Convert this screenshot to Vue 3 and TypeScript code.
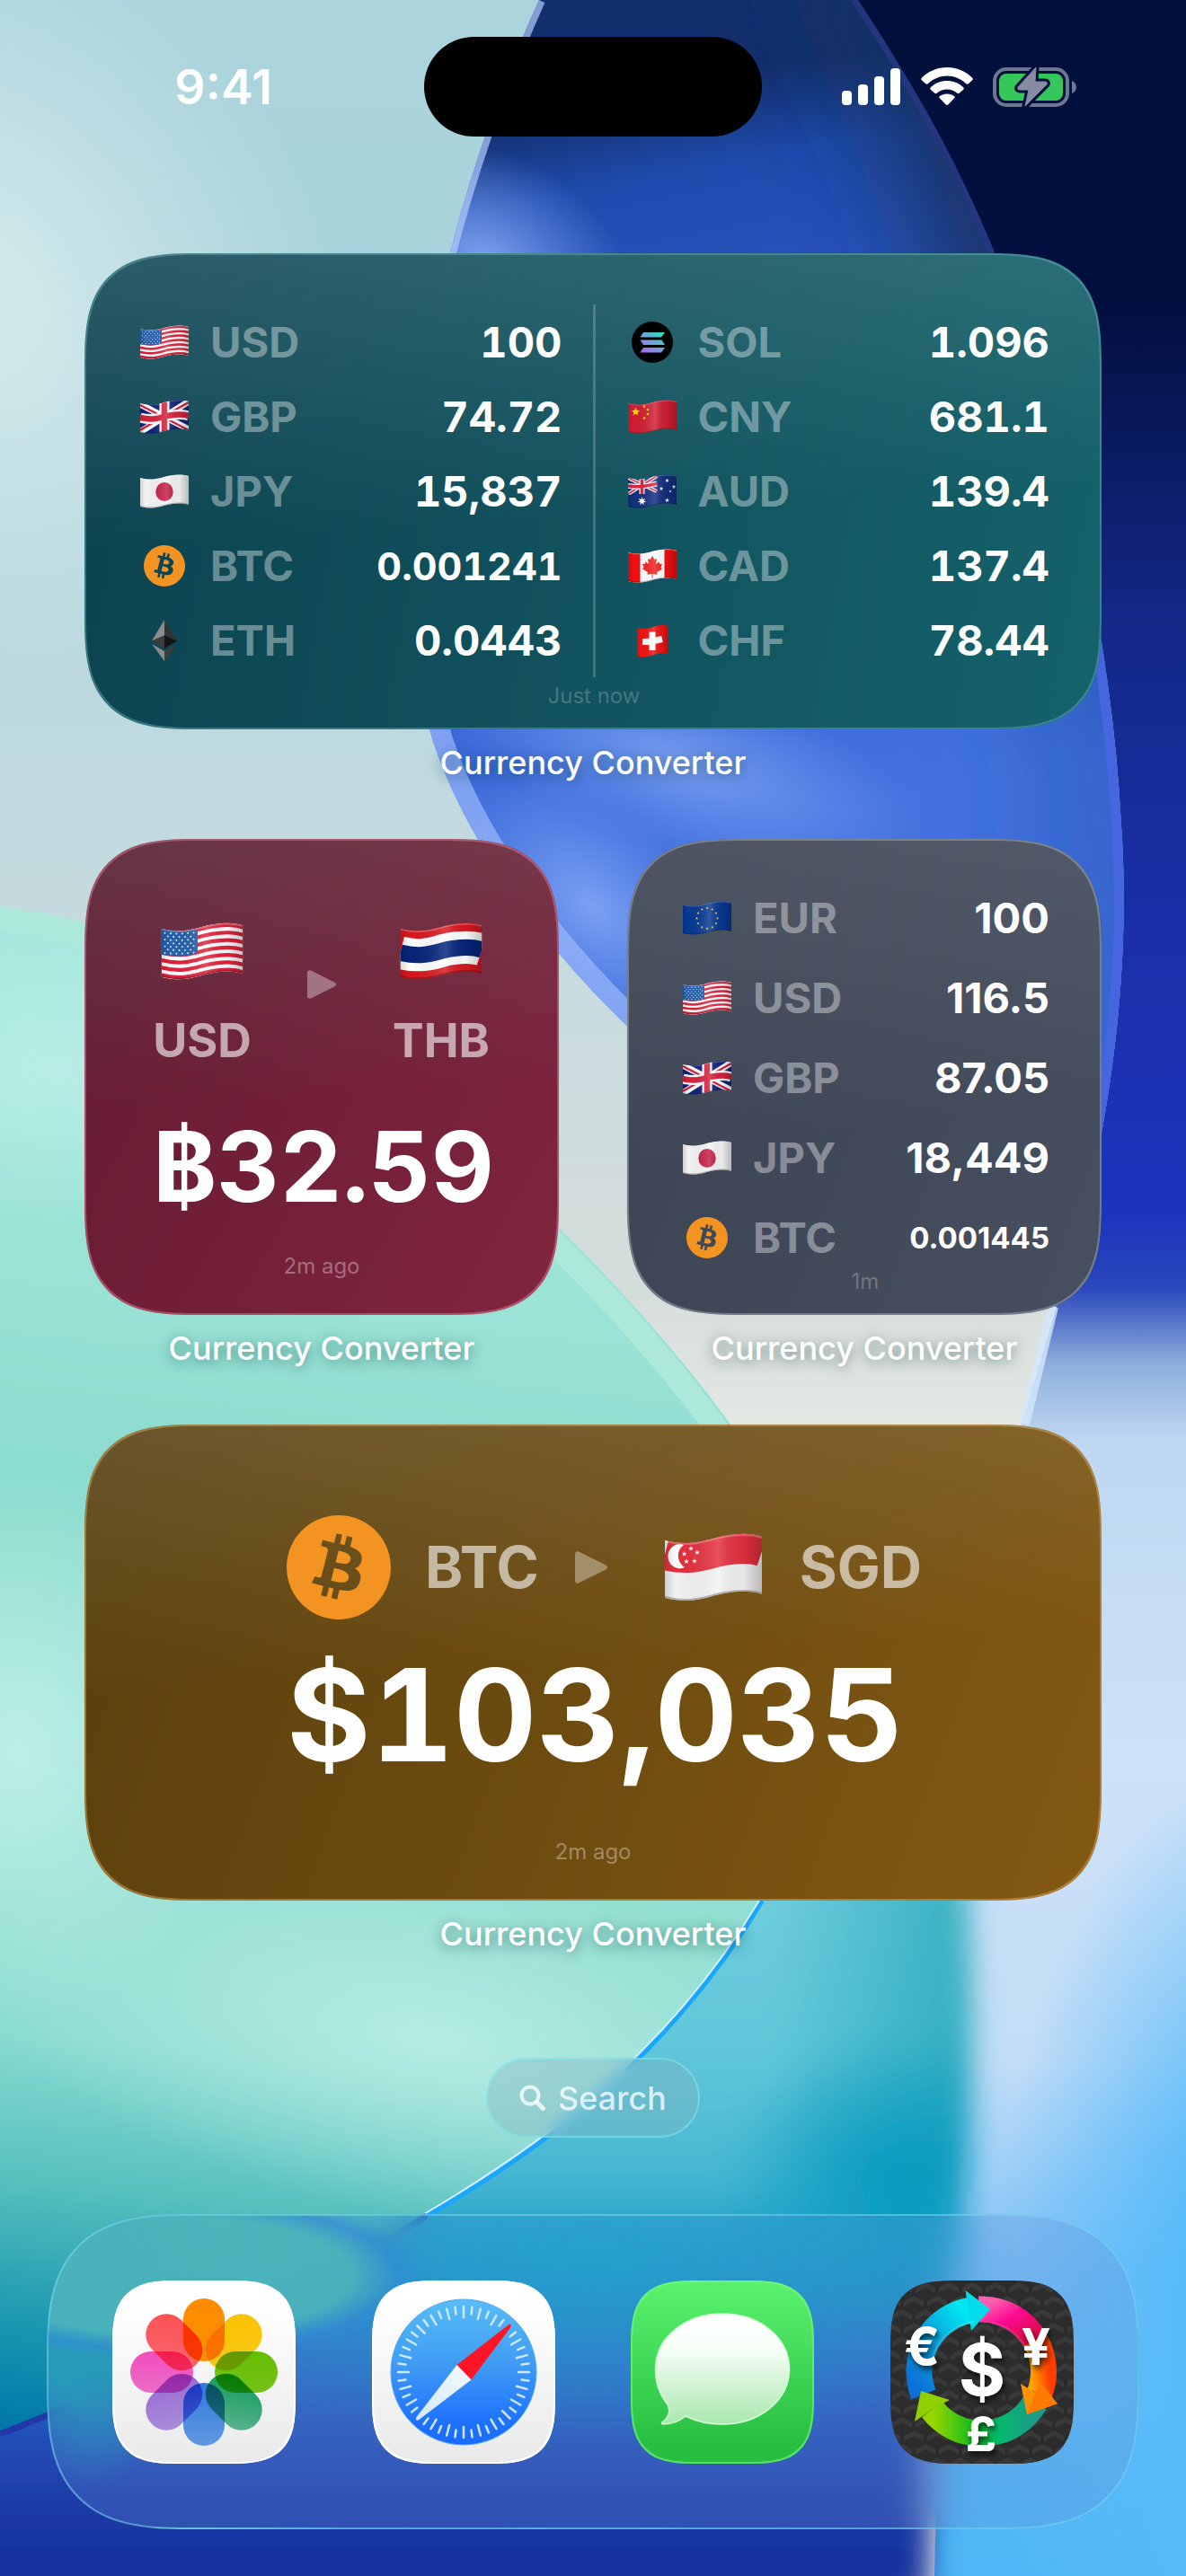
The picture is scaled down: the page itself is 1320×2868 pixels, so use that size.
<script setup lang="ts">
interface Rate {
  icon: string
  code: string
  value: string
  size?: 'mid' | 'small'
}

interface AppIcon {
  id: string
  name: string
}

const leftRates: Rate[] = [
  { icon: 'us', code: 'USD', value: '100' },
  { icon: 'gb', code: 'GBP', value: '74.72' },
  { icon: 'jp', code: 'JPY', value: '15,837' },
  { icon: 'btc', code: 'BTC', value: '0.001241', size: 'mid' },
  { icon: 'eth', code: 'ETH', value: '0.0443' },
]

const rightRates: Rate[] = [
  { icon: 'sol', code: 'SOL', value: '1.096' },
  { icon: 'cn', code: 'CNY', value: '681.1' },
  { icon: 'au', code: 'AUD', value: '139.4' },
  { icon: 'ca', code: 'CAD', value: '137.4' },
  { icon: 'ch', code: 'CHF', value: '78.44' },
]

const euroRates: Rate[] = [
  { icon: 'eu', code: 'EUR', value: '100' },
  { icon: 'us', code: 'USD', value: '116.5' },
  { icon: 'gb', code: 'GBP', value: '87.05' },
  { icon: 'jp', code: 'JPY', value: '18,449' },
  { icon: 'btc', code: 'BTC', value: '0.001445', size: 'small' },
]

const dock: AppIcon[] = [
  { id: 'photos', name: 'Photos' },
  { id: 'safari', name: 'Safari' },
  { id: 'messages', name: 'Messages' },
  { id: 'currency', name: 'Currency Converter' },
]

// Horizontal line across a waving flag that starts at height y on the hoist side.
const wave = (y: number): string => `M0 ${y}c16 4 24 -1 33 -2.5s15 -1.5 21 .5`

const usStripes = Array.from({ length: 7 }, (_, i) => 4 + (i * 2 + 0.5) * (32 / 13))

const usStars: { x: number; y: number }[] = []
for (let r = 0; r < 7; r++) {
  for (let c = 0; c < 6 - (r % 2); c++) {
    usStars.push({ x: 2.4 + c * 3.8 + (r % 2) * 1.9, y: 6.6 + r * 2.2 + Math.sin((c + 1) * 0.5) * 0.8 })
  }
}

const star = (cx: number, cy: number, r: number, points = 5): string => {
  const out: string[] = []
  for (let i = 0; i < points * 2; i++) {
    const a = (Math.PI * i) / points
    const rad = i % 2 ? r * 0.42 : r
    out.push(`${(cx + rad * Math.sin(a)).toFixed(2)},${(cy - rad * Math.cos(a)).toFixed(2)}`)
  }
  return out.join(' ')
}

const euStars = Array.from({ length: 12 }, (_, i) => {
  const a = (Math.PI * i) / 6
  return star(27 + 11.5 * Math.sin(a), 19.4 - 11.5 * Math.cos(a), 1.6)
})

const petals = [
  { angle: 0, from: '#ff8a00', to: '#ff9500' },
  { angle: 45, from: '#ffc400', to: '#ffcf1a' },
  { angle: 90, from: '#66c400', to: '#7dcb1c' },
  { angle: 135, from: '#12a35f', to: '#5cbd93' },
  { angle: 180, from: '#2f7de6', to: '#68a5f2' },
  { angle: 225, from: '#a06fdc', to: '#b394e8' },
  { angle: 270, from: '#f94fc2', to: '#f772d0' },
  { angle: 315, from: '#ff5257', to: '#ff6a70' },
]

const ticks = Array.from({ length: 48 }, (_, i) => ({ angle: i * 7.5, inner: i % 2 ? 37 : 41 }))
</script>

<template>
  <div class="screen">
    <svg class="wallpaper" viewBox="0 0 1320 2868" preserveAspectRatio="none" aria-hidden="true">
      <defs>
        <linearGradient id="wp-base" x1="0" y1="0" x2="0" y2="2868" gradientUnits="userSpaceOnUse">
          <stop offset="0" stop-color="#abd4dc" />
          <stop offset=".1" stop-color="#a9d3da" />
          <stop offset=".33" stop-color="#c3dae0" />
          <stop offset=".5" stop-color="#d5dddb" />
          <stop offset=".56" stop-color="#e6e9e4" />
          <stop offset="1" stop-color="#e6e9e4" />
        </linearGradient>
        <radialGradient id="wp-glow" cx="0" cy="330" r="420" gradientUnits="userSpaceOnUse" gradientTransform="matrix(1 .3 -.1 1 0 0)">
          <stop offset="0" stop-color="#d6ebee" />
          <stop offset="1" stop-color="#d6ebee" stop-opacity="0" />
        </radialGradient>
        <linearGradient id="wp-right" x1="0" y1="0" x2="0" y2="2868" gradientUnits="userSpaceOnUse">
          <stop offset="0" stop-color="#00103a" />
          <stop offset=".12" stop-color="#030f40" />
          <stop offset=".24" stop-color="#132887" />
          <stop offset=".36" stop-color="#1a2fa8" />
          <stop offset=".47" stop-color="#1c33bd" />
          <stop offset=".5" stop-color="#2a48bb" />
          <stop offset=".53" stop-color="#8fb0dc" />
          <stop offset=".56" stop-color="#bfd7f2" />
          <stop offset=".68" stop-color="#cde2f8" />
          <stop offset=".8" stop-color="#c3ddf6" />
          <stop offset=".88" stop-color="#7fc2f6" />
          <stop offset=".96" stop-color="#50b8f4" />
          <stop offset="1" stop-color="#4fb7f5" />
        </linearGradient>
        <radialGradient id="wp-sky" cx="1420" cy="2600" r="320" gradientUnits="userSpaceOnUse" gradientTransform="translate(1420 2600) scale(1 2) translate(-1420 -2600)">
          <stop offset="0" stop-color="#43b2fb" />
          <stop offset=".35" stop-color="#58bbf9" />
          <stop offset="1" stop-color="#58bbf9" stop-opacity="0" />
        </radialGradient>
        <linearGradient id="wp-lens" x1="520" y1="0" x2="780" y2="1350" gradientUnits="userSpaceOnUse">
          <stop offset="0" stop-color="#12306f" />
          <stop offset=".1" stop-color="#132f6c" />
          <stop offset=".17" stop-color="#1f4bad" />
          <stop offset=".3" stop-color="#2b55c0" />
          <stop offset=".5" stop-color="#3563d2" />
          <stop offset=".7" stop-color="#4473e0" />
          <stop offset="1" stop-color="#3a6ad8" />
        </linearGradient>
        <linearGradient id="wp-lens-edge" x1="0" y1="0" x2="0" y2="1480" gradientUnits="userSpaceOnUse">
          <stop offset="0" stop-color="#15315f" stop-opacity=".95" />
          <stop offset=".25" stop-color="#15315f" stop-opacity=".9" />
          <stop offset=".55" stop-color="#2656b8" stop-opacity=".5" />
          <stop offset="1" stop-color="#2656b8" stop-opacity=".2" />
        </linearGradient>
        <linearGradient id="wp-rim" x1="0" y1="0" x2="0" y2="1455" gradientUnits="userSpaceOnUse">
          <stop offset="0" stop-color="#9bb8fb" stop-opacity="0" />
          <stop offset=".3" stop-color="#9bb8fb" stop-opacity="0" />
          <stop offset=".5" stop-color="#9bb8fb" stop-opacity=".7" />
          <stop offset="1" stop-color="#9bb8fb" stop-opacity=".7" />
        </linearGradient>
        <radialGradient id="wp-spot" cx=".5" cy=".5" r=".5">
          <stop offset="0" stop-color="#8fb1f8" />
          <stop offset="1" stop-color="#7ba2f4" stop-opacity="0" />
        </radialGradient>
        <linearGradient id="wp-mint" x1="380" y1="1050" x2="200" y2="2720" gradientUnits="userSpaceOnUse">
          <stop offset="0" stop-color="#a5e8dd" />
          <stop offset=".22" stop-color="#9ce3d7" />
          <stop offset=".36" stop-color="#8cdccf" />
          <stop offset=".62" stop-color="#93dfd2" />
          <stop offset=".74" stop-color="#8adbd0" />
          <stop offset=".84" stop-color="#55c0bd" />
          <stop offset=".93" stop-color="#1c98b0" />
          <stop offset="1" stop-color="#0079a8" />
        </linearGradient>
        <radialGradient id="wp-pale" cx=".5" cy=".5" r=".5">
          <stop offset="0" stop-color="#c2f1e9" />
          <stop offset="1" stop-color="#c2f1e9" stop-opacity="0" />
        </radialGradient>
        <linearGradient id="wp-sea" x1="0" y1="2100" x2="0" y2="2868" gradientUnits="userSpaceOnUse">
          <stop offset="0" stop-color="#70cddd" />
          <stop offset=".25" stop-color="#5fc6d9" />
          <stop offset=".42" stop-color="#46b7d2" />
          <stop offset=".54" stop-color="#179ac4" />
          <stop offset=".68" stop-color="#236fc4" />
          <stop offset=".82" stop-color="#2449b4" />
          <stop offset=".93" stop-color="#1a36a2" />
          <stop offset="1" stop-color="#12309c" />
        </linearGradient>
        <linearGradient id="wp-sea-edge" x1="860" y1="0" x2="1080" y2="0" gradientUnits="userSpaceOnUse">
          <stop offset="0" stop-color="#0898ac" stop-opacity="0" />
          <stop offset="1" stop-color="#0898ac" stop-opacity=".55" />
        </linearGradient>
        <radialGradient id="wp-deep" cx=".5" cy=".5" r=".5">
          <stop offset="0" stop-color="#0499be" />
          <stop offset="1" stop-color="#0499be" stop-opacity="0" />
        </radialGradient>
        <clipPath id="wp-sea-clip">
          <path d="M-60 1900H1050C1090 2060 1090 2420 1062 2540S1040 2760 1032 2900H-60Z" />
        </clipPath>
        <clipPath id="wp-lens-clip">
          <path d="M600 0C500 220 410 560 478 812C520 960 700 1240 1176 1455C1220 1330 1262 1120 1248 920C1235 700 1190 480 1105 285C1070 200 1030 120 951 0Z" />
        </clipPath>
        <clipPath id="wp-mint-clip">
          <path d="M0 1010C220 1030 480 1220 640 1385C720 1465 780 1540 813 1586C940 1780 930 1980 845 2116C740 2290 600 2390 472 2465C330 2560 150 2650 0 2707Z" />
        </clipPath>
        <filter id="wp-blur" x="-50%" y="-50%" width="200%" height="200%">
          <feGaussianBlur stdDeviation="16" />
        </filter>
        <filter id="wp-blur-wide" x="-50%" y="-50%" width="200%" height="200%">
          <feGaussianBlur stdDeviation="60" />
        </filter>
      </defs>
      <rect width="1320" height="2868" fill="url(#wp-base)" />
      <rect width="700" height="1000" fill="url(#wp-glow)" />
      <path d="M951 0C1100 220 1230 560 1248 920C1262 1120 1220 1330 1176 1455L1137 1586C1100 1720 1060 1900 1040 2868H1320V0Z" fill="url(#wp-right)" />
      <rect x="900" y="1700" width="420" height="1168" fill="url(#wp-sky)" />
      <path d="M1172 1455L1140 1586" stroke="#d3e7fb" stroke-width="12" fill="none" opacity=".8" />
      <g clip-path="url(#wp-lens-clip)">
        <rect x="380" width="900" height="1480" fill="url(#wp-lens)" />
        <path d="M880 -60C1040 200 1130 560 1150 920S1200 1300 1180 1500H1400V-60Z" fill="url(#wp-lens-edge)" filter="url(#wp-blur-wide)" />
        <ellipse cx="540" cy="290" rx="170" ry="120" fill="url(#wp-spot)" opacity=".85" transform="rotate(25 540 290)" />
        <ellipse cx="760" cy="850" rx="280" ry="100" fill="url(#wp-spot)" opacity=".7" transform="rotate(18 760 850)" />
        <ellipse cx="660" cy="1010" rx="180" ry="110" fill="url(#wp-spot)" opacity=".75" transform="rotate(45 660 1010)" />
        <path d="M600 0C500 220 410 560 478 812C520 960 700 1240 1176 1455" fill="none" stroke="url(#wp-rim)" stroke-width="44" />
        <path d="M600 0C500 220 410 560 478 812" fill="none" stroke="#b5cbff" stroke-width="14" opacity=".7" />
        <path d="M1105 285C1190 480 1235 700 1248 920C1262 1120 1220 1330 1176 1455" fill="none" stroke="#4566df" stroke-width="22" />
      </g>
      <path d="M951 0C1030 120 1070 200 1105 285" fill="none" stroke="#22377d" stroke-width="7" />
      <g filter="url(#wp-blur)">
        <g clip-path="url(#wp-sea-clip)">
          <path d="M780 1900H1100V2900H-60V2600Z" fill="url(#wp-sea)" />
          <rect x="760" y="2000" width="340" height="440" fill="url(#wp-sea-edge)" />
          <ellipse cx="1010" cy="2430" rx="210" ry="170" fill="url(#wp-deep)" />
        </g>
      </g>
      <g clip-path="url(#wp-mint-clip)">
        <rect y="1000" width="940" height="1720" fill="url(#wp-mint)" />
        <ellipse cx="60" cy="1190" rx="280" ry="170" fill="url(#wp-pale)" opacity=".7" />
        <ellipse cx="20" cy="1950" rx="260" ry="300" fill="url(#wp-pale)" opacity=".9" />
        <ellipse cx="480" cy="2270" rx="520" ry="200" fill="url(#wp-pale)" opacity=".75" transform="rotate(10 480 2270)" />
        <path d="M0 1022C220 1042 470 1232 630 1397C710 1477 770 1552 803 1598" fill="none" stroke="#ade9da" stroke-width="26" />
      </g>
      <path d="M848 2116C743 2291 603 2392 475 2467" fill="none" stroke="#1aa6fb" stroke-width="6" />
      <path d="M845 2116C740 2290 600 2390 472 2465" fill="none" stroke="#d5f0fb" stroke-width="2" />
      <path d="M475 2467C330 2562 150 2652 0 2710" fill="none" stroke="#2237a8" stroke-width="7" />
    </svg>

    <!-- Shared flag and coin artwork -->
    <svg class="sprites" width="0" height="0" aria-hidden="true">
      <defs>
        <clipPath id="flag-clip">
          <path d="M0 4C16 8 24 3 33 1.5S48 0 54 2V34C48 32 42 32 33 33.5C24 35 16 40 0 36Z" />
        </clipPath>
        <clipPath id="swiss-clip">
          <path d="M10 5C20 8 26 4 33 2.500S41 2 44 3V34C38 32 34 33 30 34.500C24 37 16 38 10 36.500Z" />
        </clipPath>
        <linearGradient id="flag-shade" x1="0" y1="0" x2="1" y2="0">
          <stop offset="0" stop-color="#000" stop-opacity=".14" />
          <stop offset=".12" stop-color="#000" stop-opacity="0" />
          <stop offset=".55" stop-color="#fff" stop-opacity=".16" />
          <stop offset=".8" stop-color="#000" stop-opacity=".04" />
          <stop offset="1" stop-color="#000" stop-opacity=".24" />
        </linearGradient>
        <linearGradient id="sol-ink" x1="0" y1="1" x2="1" y2="0">
          <stop offset="0" stop-color="#b55cf5" />
          <stop offset=".5" stop-color="#6fa5d8" />
          <stop offset="1" stop-color="#25e5b5" />
        </linearGradient>

        <g id="flag-finish">
          <path d="M0 4C16 8 24 3 33 1.5S48 0 54 2V34C48 32 42 32 33 33.5C24 35 16 40 0 36Z" fill="url(#flag-shade)" />
          <path :d="wave(35.5)" fill="none" stroke="#000" stroke-opacity=".25" stroke-width="1" />
          <path :d="wave(4.5)" fill="none" stroke="#fff" stroke-opacity=".25" stroke-width="1" />
        </g>

        <symbol id="icon-us" viewBox="0 0 54 38">
          <g clip-path="url(#flag-clip)">
            <rect width="54" height="38" fill="#fff" />
            <path v-for="y in usStripes" :key="y" :d="wave(y)" fill="none" stroke="#e2223b" stroke-width="2.5" />
            <path d="M0 3C10 7 18 6 24 4V20C16 23 8 23 0 21Z" fill="#2561ad" />
            <circle v-for="(s, i) in usStars" :key="i" :cx="s.x" :cy="s.y" r=".55" fill="#fff" />
            <use href="#flag-finish" />
          </g>
        </symbol>

        <symbol id="icon-gb" viewBox="0 0 54 38">
          <g clip-path="url(#flag-clip)">
            <rect width="54" height="38" fill="#12237c" />
            <path d="M0 5L54 33M0 36L54 2" stroke="#fff" stroke-width="7" />
            <path d="M0 6L27 20M0 34L27 18M54 34L27 20M54 3L27 18" stroke="#d8213b" stroke-width="2.400" />
            <path d="M27 0V38" stroke="#fff" stroke-width="11" />
            <path :d="wave(20)" fill="none" stroke="#fff" stroke-width="11" />
            <path d="M27 0V38" stroke="#d5223c" stroke-width="6.500" />
            <path :d="wave(20)" fill="none" stroke="#d5223c" stroke-width="6.500" />
            <use href="#flag-finish" />
          </g>
        </symbol>

        <symbol id="icon-jp" viewBox="0 0 54 38">
          <g clip-path="url(#flag-clip)">
            <rect width="54" height="38" fill="#f4f4f4" />
            <ellipse cx="27" cy="19.500" rx="9.700" ry="10.500" fill="#c51f48" />
            <use href="#flag-finish" />
          </g>
        </symbol>

        <symbol id="icon-cn" viewBox="0 0 54 38">
          <g clip-path="url(#flag-clip)">
            <rect width="54" height="38" fill="#d11f33" />
            <polygon :points="star(8.5, 13.5, 5)" fill="#ffe100" />
            <circle cx="18" cy="7.500" r="1.300" fill="#ffd500" />
            <circle cx="22" cy="11" r="1.300" fill="#ffd500" />
            <circle cx="22" cy="16" r="1.300" fill="#ffd500" />
            <circle cx="18" cy="20.500" r="1.300" fill="#ffd500" />
            <use href="#flag-finish" />
          </g>
        </symbol>

        <symbol id="icon-au" viewBox="0 0 54 38">
          <g clip-path="url(#flag-clip)">
            <rect width="54" height="38" fill="#12307f" />
            <path d="M0 4L32 19M0 22L32 2" stroke="#fff" stroke-width="4" />
            <path d="M0 4L32 19M0 22L32 2" stroke="#e3223b" stroke-width="1.500" />
            <path d="M15.500 4V22M0 13C12 15 20 13 32 10.500" fill="none" stroke="#fff" stroke-width="6" />
            <path d="M15.500 4V22M0 13C12 15 20 13 32 10.500" fill="none" stroke="#e3223b" stroke-width="3.500" />
            <path d="M0 22.500C12 26 22 23 32 20.500L40 38H0Z" fill="#12307f" />
            <polygon :points="star(15.5, 30, 5, 7)" fill="#fff" />
            <polygon :points="star(43.5, 7, 2.4)" fill="#fff" />
            <polygon :points="star(37, 16, 2.4)" fill="#fff" />
            <polygon :points="star(51, 14, 2.4)" fill="#fff" />
            <polygon :points="star(47, 19, 1.5)" fill="#fff" />
            <polygon :points="star(43.5, 29, 2.6)" fill="#fff" />
            <use href="#flag-finish" />
          </g>
        </symbol>

        <symbol id="icon-ca" viewBox="0 0 54 38">
          <g clip-path="url(#flag-clip)">
            <rect width="54" height="38" fill="#fff" />
            <rect width="13.500" height="38" fill="#ef0f12" />
            <rect x="40.500" width="13.500" height="38" fill="#ef0f12" />
            <path d="M27 8l2.400 4 2.600-1-1 6 3.500-2.500.8 2.500 2.700-.2-1.500 4 1.500 1.500-6 4 .5 2.500-5-1v5h-1v-5l-5 1 .5-2.500-6-4 1.500-1.500-1.500-4 2.700.2.8-2.500 3.500 2.500-1-6 2.600 1z" fill="#f0201f" />
            <use href="#flag-finish" />
          </g>
        </symbol>

        <symbol id="icon-ch" viewBox="0 0 54 38">
          <g clip-path="url(#swiss-clip)">
            <rect width="54" height="38" fill="#f01414" />
            <path d="M27 9.500V30M16 20.500C24 21 31 19 38 17.500" fill="none" stroke="#fff" stroke-width="7" />
            <rect x="10" width="34" height="38" fill="url(#flag-shade)" />
          </g>
        </symbol>

        <symbol id="icon-eu" viewBox="0 0 54 38">
          <g clip-path="url(#flag-clip)">
            <rect width="54" height="38" fill="#073a94" />
            <polygon v-for="(p, i) in euStars" :key="i" :points="p" fill="#f1d84a" />
            <use href="#flag-finish" />
          </g>
        </symbol>

        <symbol id="icon-th" viewBox="0 0 54 38">
          <g clip-path="url(#flag-clip)">
            <rect width="54" height="38" fill="#d9181f" />
            <path :d="wave(20)" fill="none" stroke="#fff" stroke-width="21.500" />
            <path :d="wave(20)" fill="none" stroke="#05257a" stroke-width="10.800" />
            <use href="#flag-finish" />
          </g>
        </symbol>

        <symbol id="icon-sg" viewBox="0 0 54 38">
          <g clip-path="url(#flag-clip)">
            <rect width="54" height="38" fill="#f3f3f3" />
            <path :d="wave(12)" fill="none" stroke="#e5303f" stroke-width="17" />
            <path d="M10.500 6.500A6.500 6.800 0 1 0 11 19A7.500 7.500 0 0 1 10.500 6.500Z" fill="#fff" />
            <polygon :points="star(14.5, 8.5, 1.5)" fill="#fff" />
            <polygon :points="star(10.8, 11.5, 1.5)" fill="#fff" />
            <polygon :points="star(18, 10.8, 1.5)" fill="#fff" />
            <polygon :points="star(12, 15.8, 1.5)" fill="#fff" />
            <polygon :points="star(16.5, 15.5, 1.5)" fill="#fff" />
            <use href="#flag-finish" />
          </g>
        </symbol>

        <symbol id="icon-btc" viewBox="0 0 24 24">
          <path fill="#f39321" d="M23.638 14.904c-1.602 6.43-8.113 10.34-14.542 8.736C2.67 22.05-1.244 15.525.362 9.105 1.962 2.67 8.475-1.243 14.9.358c6.43 1.605 10.342 8.115 8.738 14.548v-.002zm-6.35-4.613c.24-1.59-.974-2.45-2.64-3.03l.54-2.153-1.315-.33-.525 2.107c-.345-.087-.705-.167-1.064-.25l.526-2.127-1.32-.33-.54 2.165c-.285-.067-.565-.132-.84-.2l-1.815-.45-.35 1.407s.975.225.955.236c.535.136.63.486.615.766l-1.477 5.92c-.075.166-.24.406-.614.314.015.02-.96-.24-.96-.24l-.66 1.51 1.71.426.93.242-.54 2.19 1.32.327.54-2.17c.36.1.705.19 1.05.273l-.51 2.154 1.32.33.545-2.19c2.24.427 3.93.257 4.64-1.774.57-1.637-.03-2.58-1.217-3.196.854-.193 1.5-.76 1.68-1.93h.01zm-3.01 4.22c-.404 1.64-3.157.75-4.05.53l.72-2.9c.896.23 3.757.67 3.33 2.37zm.41-4.24c-.37 1.49-2.662.735-3.405.55l.654-2.64c.744.18 3.137.524 2.75 2.084v.006z" />
        </symbol>

        <symbol id="icon-eth" viewBox="0 0 46 46">
          <path d="M23 0L9 23.500L23 17.500Z" fill="#8a8c8e" />
          <path d="M23 0L37 23.500L23 17.500Z" fill="#343434" />
          <path d="M23 17.500L9 23.500L23 32Z" fill="#3a3b3b" />
          <path d="M23 17.500L37 23.500L23 32Z" fill="#141414" />
          <path d="M9 27L23 46V35Z" fill="#8a8c8e" />
          <path d="M37 27L23 46V35Z" fill="#3c3c3b" />
        </symbol>

        <symbol id="icon-sol" viewBox="0 0 46 46">
          <circle cx="23" cy="23" r="23" fill="#000" />
          <path d="M13 12h24l-4 5.500H9.500zM9.500 20.500h24L37 26H13zM13 29h24l-4 5.500H9.500z" fill="url(#sol-ink)" />
        </symbol>

        <symbol id="icon-play" viewBox="0 0 32 32">
          <path d="M0 3C0 .6 2 -.4 4 .6L30.500 13.800C32.500 15 32.500 17 30.500 18.200L4 31.400C2 32.400 0 31.400 0 29Z" />
        </symbol>
      </defs>
    </svg>

    <header class="status">
      <time class="clock">9:41</time>
      <div class="island"></div>
      <div class="indicators">
        <svg width="66" height="44" viewBox="0 0 66 44" role="img" aria-label="Signal">
          <g fill="#fff">
            <rect y="26" width="11" height="16" rx="4" />
            <rect x="18" y="19" width="11" height="23" rx="4" />
            <rect x="36" y="10" width="11" height="32" rx="4" />
            <rect x="54" y="1" width="11" height="41" rx="4" />
          </g>
        </svg>
        <svg width="58" height="44" viewBox="0 0 58 44" role="img" aria-label="Wi-Fi">
          <g fill="#fff">
            <path d="M29 0C40 0 50 4.500 57 11.500C58 12.500 58 13.500 57 14.500L53 18C52 19 51 19 50 18C44 12.500 37 9.500 29 9.500S14 12.500 8 18C7 19 6 19 5 18L1 14.500C0 13.500 0 12.500 1 11.500C8 4.500 18 0 29 0Z" />
            <path d="M29 15C36 15 42 17.500 47 22C48 23 48 24 47 25L43 28.500C42 29.500 41 29.500 40 28.500C37 26 33 24.500 29 24.500S21 26 18 28.500C17 29.500 16 29.500 15 28.500L11 25C10 24 10 23 11 22C16 17.500 22 15 29 15Z" />
            <path d="M29 29.500C32 29.500 35 30.500 37 32C38 33 38 33.500 37 34.500L30.500 41.200C29.500 42.200 28.500 42.200 27.500 41.200L21 34.500C20 33.500 20 33 21 32C23 30.500 26 29.500 29 29.500Z" />
          </g>
        </svg>
        <svg width="94" height="46" viewBox="0 0 94 46" role="img" aria-label="Battery, charging">
          <defs>
            <mask id="bolt-gap">
              <rect width="94" height="46" fill="#fff" />
              <path d="M48 1L28 23C27 25 28 26 30 26H40L36 44L60 20C61 18 60 17 58 17H47Z" fill="#000" stroke="#000" stroke-width="7" stroke-linejoin="round" />
            </mask>
          </defs>
          <g mask="url(#bolt-gap)">
            <rect x="2" y="3" width="81" height="40" rx="13" fill="none" stroke="#6f7692" stroke-width="4" />
            <rect x="7" y="8" width="71" height="30" rx="8" fill="#35c759" />
          </g>
          <path d="M88 16C91 17 93 20 93 23S91 29 88 30Z" fill="#6f7692" />
          <path d="M48 1L28 23C27 25 28 26 30 26H40L36 44L60 20C61 18 60 17 58 17H47Z" fill="#858ba1" stroke="#858ba1" stroke-width="1" stroke-linejoin="round" />
        </svg>
      </div>
    </header>

    <main class="widgets">
      <section class="item wide">
        <div class="card teal">
          <div class="split">
            <table class="rates tall tabular">
              <tbody>
                <tr v-for="r in leftRates" :key="r.code">
                  <td class="mark"><svg :class="['glyph', r.icon]" aria-hidden="true"><use :href="`#icon-${r.icon}`" /></svg></td>
                  <th scope="row">{{ r.code }}</th>
                  <td :class="['amount', r.size]">{{ r.value }}</td>
                </tr>
              </tbody>
            </table>
            <div class="rule"></div>
            <table class="rates tall tabular">
              <tbody>
                <tr v-for="r in rightRates" :key="r.code">
                  <td class="mark"><svg :class="['glyph', r.icon]" aria-hidden="true"><use :href="`#icon-${r.icon}`" /></svg></td>
                  <th scope="row">{{ r.code }}</th>
                  <td :class="['amount', r.size]">{{ r.value }}</td>
                </tr>
              </tbody>
            </table>
          </div>
          <p class="stamp faint">Just now</p>
        </div>
        <h2>Currency Converter</h2>
      </section>

      <section class="item">
        <div class="card wine">
          <div class="pair">
            <div class="side">
              <svg class="flag" aria-hidden="true"><use href="#icon-us" /></svg>
              <span>USD</span>
            </div>
            <svg class="play" aria-hidden="true"><use href="#icon-play" /></svg>
            <div class="side">
              <svg class="flag" aria-hidden="true"><use href="#icon-th" /></svg>
              <span>THB</span>
            </div>
          </div>
          <p class="total">฿32.59</p>
          <p class="stamp">2m ago</p>
        </div>
        <h2>Currency Converter</h2>
      </section>

      <section class="item">
        <div class="card slate">
          <table class="rates">
            <tbody>
              <tr v-for="r in euroRates" :key="r.code">
                <td class="mark"><svg :class="['glyph', r.icon]" aria-hidden="true"><use :href="`#icon-${r.icon}`" /></svg></td>
                <th scope="row">{{ r.code }}</th>
                <td :class="['amount', r.size]">{{ r.value }}</td>
              </tr>
            </tbody>
          </table>
          <p class="stamp">1m</p>
        </div>
        <h2>Currency Converter</h2>
      </section>

      <section class="item wide">
        <div class="card bronze">
          <div class="banner">
            <svg class="coin" aria-hidden="true"><use href="#icon-btc" /></svg>
            <span>BTC</span>
            <svg class="play" aria-hidden="true"><use href="#icon-play" /></svg>
            <svg class="flag" aria-hidden="true"><use href="#icon-sg" /></svg>
            <span>SGD</span>
          </div>
          <p class="total">$103,035</p>
          <p class="stamp">2m ago</p>
        </div>
        <h2>Currency Converter</h2>
      </section>
    </main>

    <button class="search" type="button">
      <svg width="30" height="30" viewBox="0 0 30 30" aria-hidden="true">
        <circle cx="12" cy="12" r="9.500" fill="none" stroke="currentColor" stroke-width="4" />
        <path d="M19.500 19.500L26.500 26.500" stroke="currentColor" stroke-width="5" stroke-linecap="round" />
      </svg>
      Search
    </button>

    <nav class="dock" aria-label="Dock">
      <a v-for="app in dock" :key="app.id" href="#" :class="['app', app.id]" :aria-label="app.name">
        <svg v-if="app.id === 'photos'" viewBox="0 0 204 204" aria-hidden="true">
          <defs>
            <linearGradient v-for="p in petals" :id="`petal-${p.angle}`" :key="p.angle" x1="0" y1="0" x2="0" y2="1" :gradientTransform="`rotate(${-p.angle} .5 .5)`">
              <stop offset="0" :stop-color="p.from" />
              <stop offset="1" :stop-color="p.to" />
            </linearGradient>
          </defs>
          <rect v-for="p in petals" :key="p.angle" class="petal" x="79" y="20" width="46" height="70" rx="23" :fill="`url(#petal-${p.angle})`" :transform="`rotate(${p.angle} 102 102)`" />
        </svg>

        <svg v-else-if="app.id === 'safari'" viewBox="0 0 204 204" aria-hidden="true">
          <defs>
            <linearGradient id="safari-face" x1="0" y1="0" x2="0" y2="1">
              <stop offset="0" stop-color="#57bdf6" />
              <stop offset=".45" stop-color="#3f9bf3" />
              <stop offset=".85" stop-color="#1d71fe" />
              <stop offset="1" stop-color="#1a6cff" />
            </linearGradient>
            <linearGradient id="safari-south" x1="1" y1="0" x2="0" y2="1">
              <stop offset="0" stop-color="#f5fbff" />
              <stop offset="1" stop-color="#d3e8fb" />
            </linearGradient>
          </defs>
          <circle cx="102" cy="102" r="81" fill="url(#safari-face)" stroke="#4ba5f5" stroke-width="1" />
          <line v-for="t in ticks" :key="t.angle" x1="102" y1="29" x2="102" :y2="t.inner" stroke="#cfe7fc" stroke-width="2.500" stroke-linecap="round" :transform="`rotate(${t.angle} 102 102)`" />
          <path d="M151 50C154 47.500 156 49.500 154 52.500L110.500 110.500L94.500 94Z" fill="#ff1526" />
          <path d="M94.500 94L110.500 110.500L53 154.500C50 157 47.500 155 49.500 152Z" fill="url(#safari-south)" />
        </svg>

        <svg v-else-if="app.id === 'messages'" viewBox="0 0 204 204" aria-hidden="true">
          <defs>
            <linearGradient id="bubble" x1="0" y1="0" x2="0" y2="1">
              <stop offset="0" stop-color="#fff" />
              <stop offset=".3" stop-color="#f8fef8" />
              <stop offset="1" stop-color="#a9e8ae" />
            </linearGradient>
          </defs>
          <path d="M102 37C144 37 176.500 64 176.500 98.500S144 160 102 160C87 160 73 157 61 151C55 156 46 160 36 160C34 160 34 158.500 36 157C43 152 44 145 41 138C32 127 27.500 113 27.500 98.500C27.500 64 60 37 102 37Z" fill="url(#bubble)" stroke="#d5fbd8" stroke-width="1.500" />
        </svg>

        <svg v-else viewBox="0 0 204 204" aria-hidden="true">
          <defs>
            <pattern id="weave" width="26" height="30" patternUnits="userSpaceOnUse">
              <path d="M2 8L13 2L24 8V14L13 8L2 14ZM-11 23L0 17L11 23V29L0 23L-11 29ZM15 23L26 17L37 23V29L26 23L15 29Z" fill="#39393a" />
            </pattern>
            <linearGradient id="ring-blue" x1="0" y1="1" x2=".8" y2="0">
              <stop offset="0" stop-color="#0a6fd6" />
              <stop offset=".5" stop-color="#0a9fdc" />
              <stop offset="1" stop-color="#00e6f2" />
            </linearGradient>
            <linearGradient id="ring-pink" x1="0" y1="0" x2="1" y2="1">
              <stop offset="0" stop-color="#ff5fae" />
              <stop offset=".4" stop-color="#ff0a92" />
              <stop offset="1" stop-color="#d40a3c" />
            </linearGradient>
            <linearGradient id="ring-orange" x1="1" y1="0" x2="0" y2="1">
              <stop offset="0" stop-color="#ff3d00" />
              <stop offset="1" stop-color="#ffa000" />
            </linearGradient>
            <linearGradient id="ring-green" x1="0" y1="0" x2="1" y2="0">
              <stop offset="0" stop-color="#97d600" />
              <stop offset=".4" stop-color="#14bd1c" />
              <stop offset=".65" stop-color="#05b86c" />
              <stop offset="1" stop-color="#1c9a8a" />
            </linearGradient>
            <filter id="glyph-shadow" x="-20%" y="-20%" width="150%" height="150%">
              <feDropShadow dx="2" dy="4" stdDeviation="3" flood-color="#000" flood-opacity=".7" />
            </filter>
          </defs>
          <rect width="204" height="204" fill="#2c2c2d" />
          <rect width="204" height="204" fill="url(#weave)" />
          <g fill="none" stroke-width="29">
            <path d="M98.600 32A69 69 0 0 1 162 68" stroke="url(#ring-pink)" />
            <path d="M161 66.500A69 69 0 0 1 166 126" stroke="url(#ring-orange)" />
            <path d="M161 136A69 69 0 0 1 46.600 143.500" stroke="url(#ring-green)" />
            <path d="M37 127A69 69 0 0 1 92 32.600" stroke="url(#ring-blue)" />
          </g>
          <path d="M83.500 11L111 32L90 56Z" fill="#00dcec" />
          <path d="M186 137L152 149L145 115L160 124Z" fill="#ff9200" />
          <path d="M166 112L186 137L152 149Z" fill="#ff7a00" />
          <path d="M27 157L34 123L66 133L52 140Z" fill="#8fd000" />
          <path d="M94 46A56 56 0 0 0 46 92M113 47A56 56 0 0 1 152 78" fill="none" stroke="#fff" stroke-opacity=".12" stroke-width="3" />
          <g class="symbols" fill="#fff" text-anchor="middle" filter="url(#glyph-shadow)">
            <text x="102" y="128" font-size="80">$</text>
            <text x="35" y="94" font-size="58">€</text>
            <text x="162" y="94" font-size="56">¥</text>
            <text x="101" y="190" font-size="54">£</text>
          </g>
        </svg>
      </a>
    </nav>
  </div>
</template>

<style>
body {
  margin: 0;
}
</style>

<style scoped>
.screen {
  position: relative;
  display: flex;
  flex-direction: column;
  overflow: hidden;
  font-family: Inter, "Noto Sans", "Liberation Sans", sans-serif;
  color: #fff;
}

.wallpaper {
  position: absolute;
  inset: 0;
  width: 100%;
  height: 100%;
}

.sprites {
  position: absolute;
}

.status,
.widgets,
.search,
.dock {
  position: relative;
}

.status {
  display: grid;
  grid-template-columns: 1fr 376px 1fr;
  padding: 41px 0 130px;
}

.clock {
  justify-self: end;
  margin-right: 169px;
  font-size: 54px;
  font-weight: 600;
  line-height: 111px;
}

.island {
  height: 111px;
  border-radius: 56px;
  background: #000;
}

.indicators {
  display: flex;
  align-items: center;
  gap: 22px;
  margin-left: 89px;
}

.widgets {
  display: grid;
  grid-template-columns: minmax(0, 1fr) minmax(0, 1fr);
  column-gap: 76px;
  padding: 0 94px;
}

.wide {
  grid-column: 1 / -1;
}

.card {
  box-sizing: border-box;
  min-height: 530px;
  padding: 0 58px 0 60px;
  border-radius: 94px;
  overflow: hidden;
}

@supports (corner-shape: superellipse(1.6)) {
  .card {
    border-radius: 130px;
    corner-shape: superellipse(1.6);
  }
}

.teal {
  padding-top: 57px;
  background: linear-gradient(176deg, rgba(255, 255, 255, 0.13), rgba(255, 255, 255, 0) 55%), linear-gradient(100deg, #0c4250, #15626b);
  box-shadow: inset 0 0 0 2px rgba(110, 190, 195, 0.4);
}

.wine {
  padding: 93px 76px 0;
  background: linear-gradient(176deg, rgba(120, 150, 140, 0.22), rgba(255, 255, 255, 0) 55%), linear-gradient(120deg, #611a30, #82253f);
  box-shadow: inset 0 0 0 2px rgba(225, 120, 150, 0.5);
}

.slate {
  padding-top: 43px;
  background: linear-gradient(170deg, rgba(255, 240, 240, 0.1), rgba(255, 255, 255, 0) 60%), linear-gradient(110deg, #3b4352, #465060);
  box-shadow: inset 0 0 0 2px rgba(190, 195, 205, 0.4);
}

.bronze {
  padding: 101px 0 0 225px;
  background: linear-gradient(176deg, rgba(180, 190, 190, 0.18), rgba(255, 255, 255, 0) 50%), linear-gradient(110deg, #593f0c, #835913);
  box-shadow: inset 0 0 0 2px rgba(215, 165, 90, 0.5);
}

h2 {
  margin: 0;
  padding: 14px 0 62px;
  font-size: 36px;
  font-weight: 500;
  line-height: 46px;
  text-align: center;
  text-shadow: 0 3px 14px rgba(0, 60, 60, 0.55);
}

.split {
  display: flex;
  gap: 34px;
}

.rule {
  width: 3px;
  background: rgba(255, 255, 255, 0.2);
}

.rates {
  width: 100%;
  flex: 1;
  border-collapse: collapse;
  font-size: 47px;
  line-height: 58px;
}

.rates td,
.rates th {
  height: 89px;
  padding: 0;
  font-weight: 700;
}

.rates.tall td,
.rates.tall th {
  height: 83px;
}

.tabular {
  font-variant-numeric: tabular-nums;
}

.rates th {
  padding-left: 22px;
  text-align: left;
  color: rgba(255, 255, 255, 0.4);
}

.mark {
  width: 58px;
}

.glyph {
  display: block;
  width: 54px;
  height: 38px;
  margin: 0 auto;
}

.glyph.btc,
.glyph.eth,
.glyph.sol {
  width: 46px;
  height: 46px;
}

.rates .amount {
  text-align: right;
}

.amount.mid {
  font-size: 43px;
}

.amount.small {
  font-size: 33px;
}

.stamp {
  margin: 43px 0 0;
  font-size: 24px;
  line-height: 26px;
  text-align: center;
  color: rgba(255, 255, 255, 0.35);
}

.teal .stamp {
  margin-top: 8px;
}

.stamp.faint {
  color: rgba(255, 255, 255, 0.22);
}

.slate .stamp {
  margin-top: -8px;
  color: rgba(255, 255, 255, 0.25);
}

.pair {
  display: flex;
  align-items: center;
  justify-content: space-between;
}

.side {
  display: flex;
  flex-direction: column;
  align-items: center;
  gap: 38px;
  width: 110px;
  font-size: 52px;
  font-weight: 700;
  line-height: 60px;
  color: rgba(255, 255, 255, 0.6);
}

.side .flag {
  width: 92px;
  height: 64px;
}

.play {
  width: 32px;
  height: 32px;
  fill: rgba(255, 255, 255, 0.35);
}

.pair .play {
  margin-bottom: 24px;
}

.total {
  margin: 0;
  font-weight: 700;
  white-space: nowrap;
  font-variant-numeric: tabular-nums;
}

.wine .total {
  margin-top: 55px;
  font-size: 108px;
  line-height: 110px;
  text-align: center;
}

.banner {
  display: flex;
  align-items: center;
  font-size: 64px;
  font-weight: 700;
  line-height: 116px;
  color: rgba(255, 255, 255, 0.6);
}

.banner .coin {
  width: 116px;
  height: 116px;
  margin-right: 38px;
}

.banner .play {
  width: 40px;
  height: 36px;
  margin: 0 62px 0 38px;
}

.banner .flag {
  width: 108px;
  height: 76px;
  margin-right: 42px;
}

.bronze .total {
  margin-top: 36px;
  font-size: 143px;
  line-height: 140px;
}

.bronze .stamp {
  margin: 70px 225px 0 0;
}

.search {
  display: flex;
  align-items: center;
  align-self: center;
  gap: 13px;
  height: 89px;
  margin: 53px 0 85px;
  padding: 0 35px;
  border: 2px solid rgba(130, 240, 240, 0.5);
  border-radius: 45px;
  background: rgba(130, 180, 190, 0.4);
  backdrop-filter: blur(10px);
  color: rgba(255, 255, 255, 0.75);
  font: 500 36px/46px Inter, "Noto Sans", sans-serif;
}

.dock {
  display: flex;
  align-items: center;
  justify-content: space-between;
  box-sizing: border-box;
  min-height: 351px;
  margin: 0 52px 52px;
  padding: 0 71px;
  border: 2px solid rgba(120, 215, 240, 0.55);
  border-radius: 124px;
  background:
    radial-gradient(ellipse 24% 27% at 11% 19%, rgba(76, 180, 186, 0.9) 70%, rgba(50, 140, 210, 0.7) 88%, rgba(50, 140, 210, 0)),
    radial-gradient(ellipse 9% 55% at 4% 32%, rgba(40, 160, 185, 0.7) 50%, rgba(40, 160, 185, 0)),
    radial-gradient(ellipse 40% 60% at 50% 15%, rgba(30, 165, 205, 0.6), rgba(30, 165, 205, 0)),
    rgba(100, 145, 215, 0.28);
  backdrop-filter: blur(16px);
}

.app {
  display: block;
  width: 204px;
  height: 204px;
  border-radius: 56px;
  overflow: hidden;
}

@supports (corner-shape: superellipse(1.6)) {
  .app {
    border-radius: 76px;
    corner-shape: superellipse(1.6);
  }

  .dock {
    border-radius: 160px;
    corner-shape: superellipse(1.5);
  }
}

.app svg {
  display: block;
  width: 100%;
  height: 100%;
}

.photos,
.safari {
  background: linear-gradient(#fff 10%, #e9e9ea);
  box-shadow: inset 0 0 0 2px #fff;
}

.messages {
  background: linear-gradient(#5af36f, #28be40 90%);
  box-shadow: inset 0 0 0 2px rgba(120, 245, 135, 0.6);
}

.petal {
  mix-blend-mode: multiply;
}

.symbols {
  font-family: Inter, "Liberation Sans", sans-serif;
  font-weight: 700;
}
</style>
